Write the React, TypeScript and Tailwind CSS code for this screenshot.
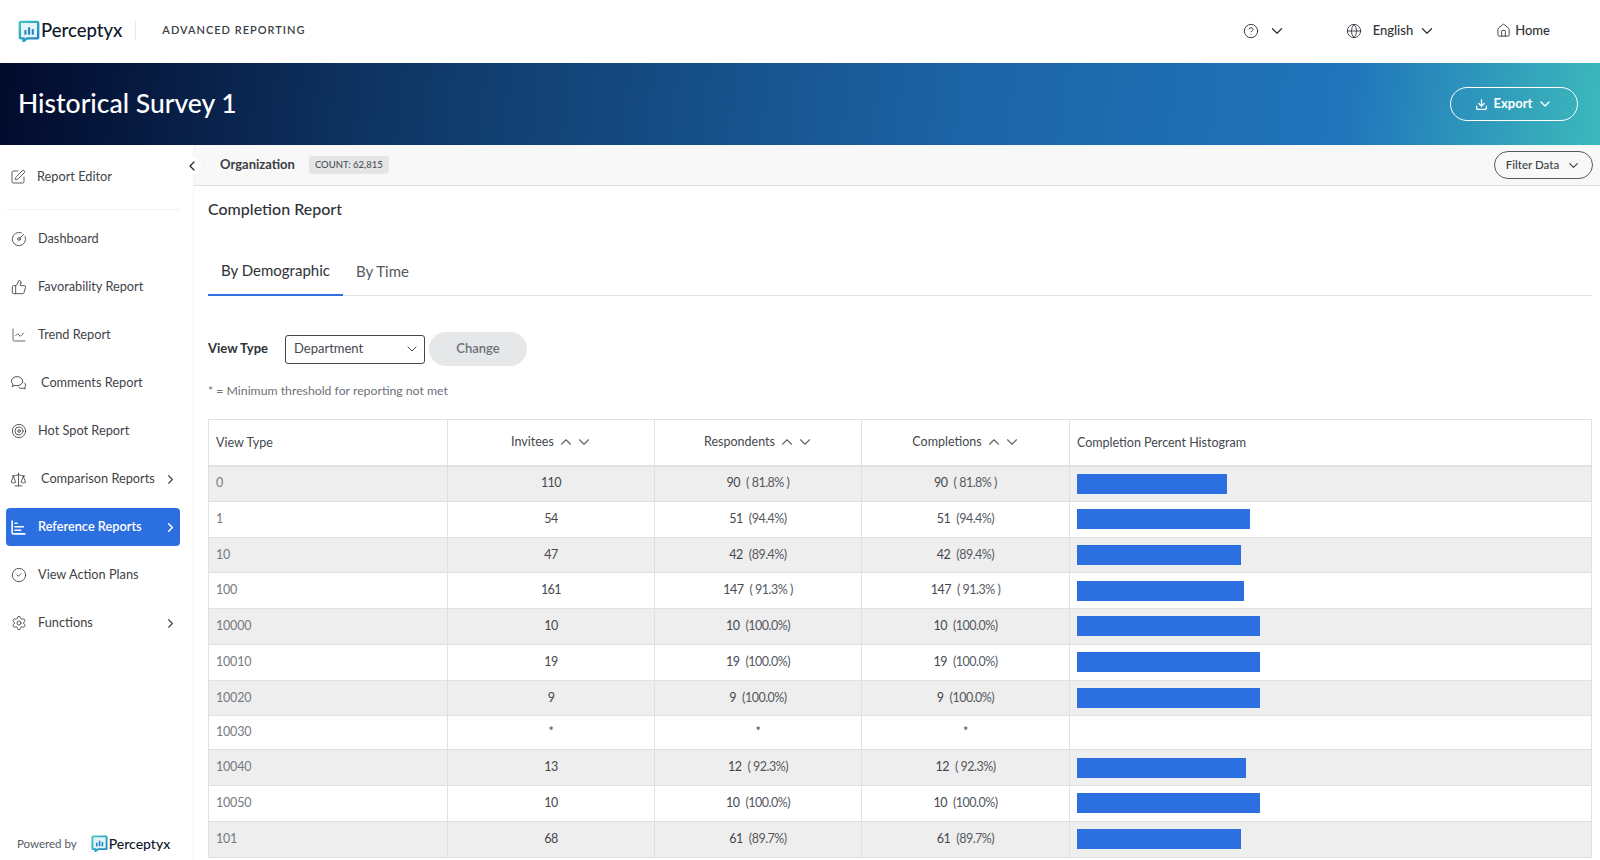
import { FC, ReactNode } from "react";
import {
  ChartBar,
  ChartLine,
  ChevronDown,
  ChevronLeft,
  ChevronRight,
  ChevronUp,
  CircleCheck,
  CircleGauge,
  CircleHelp,
  Download,
  Globe,
  House,
  Scale,
  Settings,
  SquarePen,
  Target,
  ThumbsUp,
} from "lucide-react";

const Logo: FC<{ size: number }> = ({ size }) => (
  <svg width={size} height={size} viewBox="0 0 24 24" fill="none">
    <defs>
      <linearGradient id="logoGrad" x1="0" y1="0" x2="1" y2="1">
        <stop offset="0" stopColor="#3ec6c0" />
        <stop offset="1" stopColor="#1f7fc4" />
      </linearGradient>
    </defs>
    <path
      d="M3 2h18a1 1 0 0 1 1 1v16a1 1 0 0 1-1 1H10l-4 3v-3H3a1 1 0 0 1-1-1V3a1 1 0 0 1 1-1z"
      fill="#e3f4f7"
      stroke="url(#logoGrad)"
      strokeWidth="2.6"
    />
    <rect x="7" y="11" width="2.2" height="5" fill="#1f7fc4" />
    <rect x="11" y="8" width="2.2" height="8" fill="#1f7fc4" />
    <rect x="15" y="10" width="2.2" height="6" fill="#1f7fc4" />
  </svg>
);

const CommentsIcon = () => (
  <svg width="18" height="18" viewBox="0 0 24 24" fill="none" stroke="currentColor" strokeWidth="1.3">
    <path d="M10 3c-4.4 0-8 2.7-8 6.2 0 1.700.9 3.200 2.300 4.300L3 17l4-1.600c1 .3 2 .4 3 .4 4.400 0 8-2.900 8-6.400S14.400 3 10 3z" />
    <path d="M20 11.500c1.300.9 2 2.100 2 3.500 0 1.100-.5 2.100-1.300 2.900l.8 2.600-3-1.200c-2.200.6-4.800.2-6.300-1.300" />
  </svg>
);

interface NavItem {
  label: string;
  icon: ReactNode;
  arrow?: boolean;
  active?: boolean;
  wide?: boolean;
}

const navItems: NavItem[] = [
  { label: "Dashboard", icon: <CircleGauge size={16} strokeWidth={1.3} /> },
  { label: "Favorability Report", icon: <ThumbsUp size={16} strokeWidth={1.3} /> },
  { label: "Trend Report", icon: <ChartLine size={16} strokeWidth={1.2} /> },
  { label: "Comments Report", icon: <CommentsIcon />, wide: true },
  { label: "Hot Spot Report", icon: <Target size={16} strokeWidth={1.3} /> },
  { label: "Comparison Reports", icon: <Scale size={17} strokeWidth={1.2} />, arrow: true, wide: true },
  { label: "Reference Reports", icon: <ChartBar size={17} strokeWidth={2.2} />, arrow: true, active: true },
  { label: "View Action Plans", icon: <CircleCheck size={16} strokeWidth={1.3} /> },
  { label: "Functions", icon: <Settings size={16} strokeWidth={1.3} />, arrow: true },
];

const rows = [
  { name: "0", invitees: "110", count: "90", pct: "( 81.8% )", value: 81.8 },
  { name: "1", invitees: "54", count: "51", pct: "(94.4%)", value: 94.4 },
  { name: "10", invitees: "47", count: "42", pct: "(89.4%)", value: 89.4 },
  { name: "100", invitees: "161", count: "147", pct: "( 91.3% )", value: 91.3 },
  { name: "10000", invitees: "10", count: "10", pct: "(100.0%)", value: 100 },
  { name: "10010", invitees: "19", count: "19", pct: "(100.0%)", value: 100 },
  { name: "10020", invitees: "9", count: "9", pct: "(100.0%)", value: 100 },
  { name: "10030", invitees: "*", count: "*", pct: "", value: 0 },
  { name: "10040", invitees: "13", count: "12", pct: "( 92.3%)", value: 92.3 },
  { name: "10050", invitees: "10", count: "10", pct: "(100.0%)", value: 100 },
  { name: "101", invitees: "68", count: "61", pct: "(89.7%)", value: 89.7 },
];

const SortHead: FC<{ label: string }> = ({ label }) => (
  <div className="flex items-center justify-center gap-[3px] pl-[2px]">
    <span>{label}</span>
    <span className="flex items-center text-[#666]">
      <ChevronUp size={18} strokeWidth={1.5} />
      <ChevronDown size={18} strokeWidth={1.5} />
    </span>
  </div>
);

const Sidebar = () => (
  <aside className="relative flex w-[194px] shrink-0 flex-col border-r border-[#f4f4f4] bg-white text-[12.75px] text-[#3f4349]">
    <div className="mx-[6px] mt-[13px] flex h-[38px] items-center gap-[11px] px-[4px]">
      <SquarePen size={16} strokeWidth={1.3} />
      <span>Report Editor</span>
    </div>
    <div className="mx-[6px] mt-[13px] mr-[13px] h-px bg-[#f0f0f0]" />
    <nav className="mt-[10px] flex flex-col gap-[10px]">
      {navItems.map((item) => (
        <div
          key={item.label}
          className={
            item.active
              ? "ml-[6px] mr-[13px] flex h-[38px] items-center rounded-[4px] bg-[#2b6fe0] px-[4px] font-semibold text-white"
              : "ml-[6px] mr-[13px] flex h-[38px] items-center px-[4px] text-[#3f4349]"
          }
        >
          <span className="flex w-[17px] shrink-0 justify-center">{item.icon}</span>
          <span className={item.wide ? "ml-[14px]" : "ml-[11px]"}>{item.label}</span>
          {item.arrow && (
            <ChevronRight size={15} strokeWidth={item.active ? 2.4 : 1.8} className="ml-auto mr-[-2px]" />
          )}
        </div>
      ))}
    </nav>
    <div className="mt-auto mb-[6px] flex items-center pl-[17px] text-[11.5px] text-[#55595f]">
      <span>Powered by</span>
      <span className="ml-[14px] mr-[1px]">
        <Logo size={17} />
      </span>
      <span className="text-[14px] font-medium text-[#10182b]">Perceptyx</span>
    </div>
    <button className="absolute right-[-8px] top-[12px] flex h-[18px] w-[18px] items-center justify-center rounded-full bg-white text-[#222]">
      <ChevronLeft size={16} strokeWidth={1.8} />
    </button>
  </aside>
);

export default function App() {
  return (
    <div
      className="flex h-[860px] flex-col overflow-hidden bg-white text-[#3f4349]"
      style={{ fontFamily: '"Lato", "Open Sans", sans-serif' }}
    >
      <header className="flex h-[63px] shrink-0 items-center pb-[2px] pl-[18px]">
        <Logo size={22} />
        <span className="ml-[1px] text-[18.5px] font-medium text-[#10182b]">Perceptyx</span>
        <span className="ml-[13px] h-[19px] w-px bg-[#e8e8e8]" />
        <span className="ml-[26px] text-[11px] font-semibold tracking-[1px] text-[#3a3f47]">
          ADVANCED REPORTING
        </span>
        <div className="ml-auto flex items-center text-[13px] font-medium text-[#2e3238]">
          <CircleHelp size={16} strokeWidth={1.4} />
          <ChevronDown size={18} strokeWidth={1.6} className="ml-[9px]" />
          <Globe size={16} strokeWidth={1.3} className="ml-[60px]" />
          <span className="ml-[11px]">English</span>
          <ChevronDown size={18} strokeWidth={1.6} className="ml-[5px]" />
          <House size={15} strokeWidth={1.4} className="ml-[60px]" />
          <span className="ml-[4px]">Home</span>
          <span className="w-[50px]" />
        </div>
      </header>

      <div className="flex h-[82px] shrink-0 items-center justify-between bg-[linear-gradient(97deg,#020a2c_0%,#0f3766_25%,#1c64a6_60%,#2075bb_84%,#3cb9bc_100%)] pl-[18px] pr-[22px]">
        <h1 className="text-[26.5px] font-medium text-white">Historical Survey 1</h1>
        <button className="flex h-[34px] w-[128px] items-center justify-center gap-[5px] rounded-full border border-white text-[13px] font-bold text-white">
          <Download size={13} strokeWidth={2.4} />
          <span className="ml-[1px]">Export</span>
          <ChevronDown size={16} strokeWidth={2} />
        </button>
      </div>

      <div className="flex min-h-0 flex-1">
        <Sidebar />
        <main className="min-w-0 flex-1">
          <div className="flex h-[41px] items-center border-b border-[#dcdcdc] bg-[#f8f8f8] pl-[26px] pr-[7px]">
            <span className="text-[13px] font-bold text-[#3a3e44]">Organization</span>
            <span className="ml-[14px] rounded-[3px] bg-[#e4e5e7] px-[6px] py-[2px] text-[9.5px] font-medium text-[#4d5157]">
              COUNT: 62,815
            </span>
            <button className="ml-auto flex h-[28px] w-[99px] items-center justify-center gap-[7px] rounded-full border border-[#55595f] text-[11.5px] font-medium text-[#3a3e44]">
              Filter Data
              <ChevronDown size={15} strokeWidth={1.8} />
            </button>
          </div>

          <div className="pl-[14px] pr-[8px]">
            <h2 className="mt-[13px] text-[16px] font-medium leading-[20px] text-[#2e3238]">Completion Report</h2>

            <div className="mt-[28px] flex h-[49px] border-b border-[#e3e3e3] text-[15px]">
              <div className="mb-[-1px] flex w-[135px] items-center justify-center border-b-2 border-[#2b6fe0] text-[#2e3238]">
                By Demographic
              </div>
              <div className="ml-[13px] flex items-center text-[#55595f]">By Time</div>
            </div>

            <div className="mt-[36px] flex items-center">
              <span className="w-[77px] text-[13px] font-bold text-[#2e3238]">View Type</span>
              <div className="flex h-[29px] w-[140px] items-center justify-between rounded-[3px] border border-[#44484e] pl-[8px] pr-[4px] text-[13px] text-[#44484e]">
                Department
                <ChevronDown size={16} strokeWidth={1.5} />
              </div>
              <button className="ml-[4px] h-[34px] w-[98px] rounded-full bg-[#e6e7e9] text-[13px] font-semibold text-[#6d7178]">
                Change
              </button>
            </div>

            <p className="mt-[17px] text-[12.25px] leading-[16px] text-[#6d7178]">* = Minimum threshold for reporting not met</p>

            <table className="mt-[20px] w-[1384px] table-fixed border-collapse text-[12.5px] text-[#44484e]">
              <thead>
                <tr className="h-[46px] border-b-2 border-[#e0e0e0]">
                  <th className="w-[239px] border border-[#e0e0e0] pl-[7px] pt-[3px] text-left font-normal">View Type</th>
                  <th className="w-[207px] border border-[#e0e0e0] font-normal">
                    <SortHead label="Invitees" />
                  </th>
                  <th className="w-[207px] border border-[#e0e0e0] font-normal">
                    <SortHead label="Respondents" />
                  </th>
                  <th className="w-[208px] border border-[#e0e0e0] font-normal">
                    <SortHead label="Completions" />
                  </th>
                  <th className="border border-[#e0e0e0] pl-[7px] pt-[3px] text-left font-normal">Completion Percent Histogram</th>
                </tr>
              </thead>
              <tbody>
                {rows.map((row, index) => (
                  <tr
                    key={row.name}
                    className={index % 2 === 0 ? "h-[35.75px] bg-[#eeeeee]" : row.value === 0 ? "h-[34px]" : "h-[35.75px]"}
                  >
                    <td className="border border-[#e0e0e0] pl-[7px] tracking-[-0.2px] text-[#777b81]">{row.name}</td>
                    <td className="border border-[#e0e0e0] text-center tracking-[-0.5px]">{row.invitees}</td>
                    {[0, 1].map((col) => (
                      <td key={col} className="border border-[#e0e0e0] text-center tracking-[-0.5px]">
                        {row.count}
                        {row.pct && <span className="ml-[6px] text-[#55595f]">{row.pct}</span>}
                      </td>
                    ))}
                    <td className="border border-[#e0e0e0] pl-[7px]">
                      {row.value > 0 && (
                        <div className="h-[20px] bg-[#2b6fe0]" style={{ width: `${row.value * 1.83}px` }} />
                      )}
                    </td>
                  </tr>
                ))}
              </tbody>
            </table>
          </div>
        </main>
      </div>
    </div>
  );
}
